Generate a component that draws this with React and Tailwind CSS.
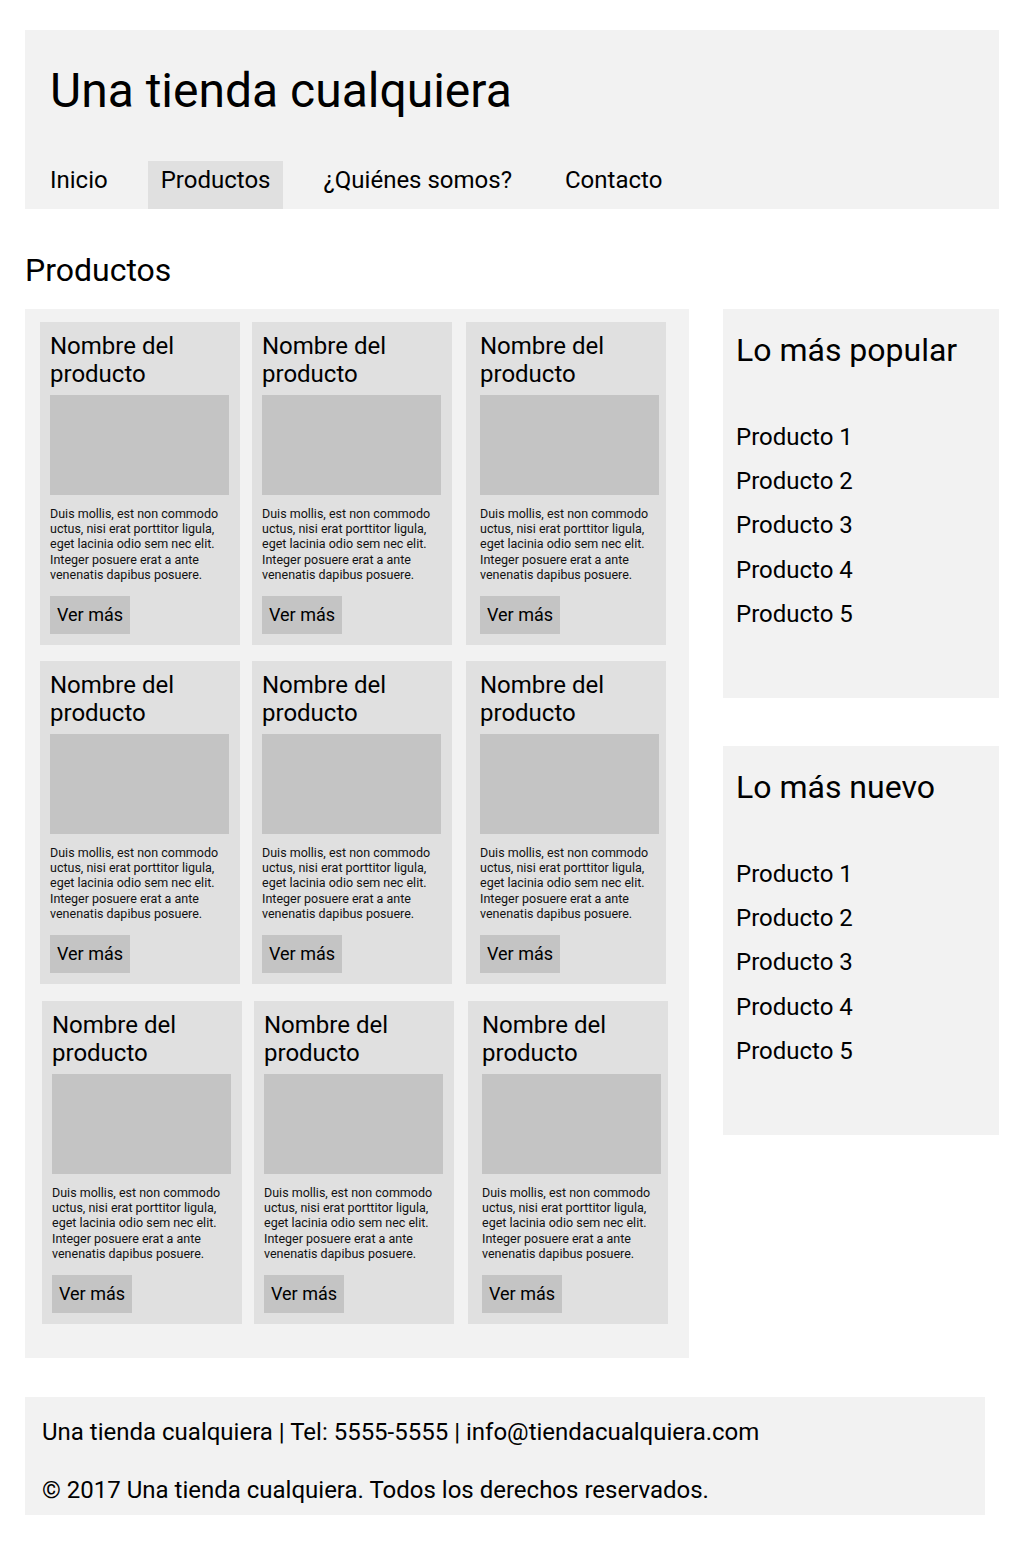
import React from 'react';

const navItems = ['Inicio', 'Productos', '¿Quiénes somos?', 'Contacto'];

const rows = [
  { top: 'mt-[13px]', offsets: ['ml-[15px]', 'ml-[12px]', 'ml-[14px]'] },
  { top: 'mt-[16px]', offsets: ['ml-[15px]', 'ml-[12px]', 'ml-[14px]'] },
  { top: 'mt-[17px]', offsets: ['ml-[17px]', 'ml-[12px]', 'ml-[14px]'] },
];

function ProductCard({ offset, wide }) {
  return (
    <div className={`${offset} w-[200px] bg-[#e0e0e0] pt-[10px] pb-[11px] ${wide ? 'pl-[14px] pr-[7px]' : 'pl-[10px] pr-[11px]'}`}>
      <h3 className="text-[24px] leading-[28px] text-black">Nombre del producto</h3>
      <div className="mt-[7px] h-[100px] w-[179px] bg-[#c4c4c4]" />
      <p className="mt-[11px] text-[12.5px] leading-[15.4px] text-[#111]">
        Duis mollis, est non commodo uctus, nisi erat porttitor ligula, eget lacinia odio sem nec elit.
        Integer posuere erat a ante venenatis dapibus posuere.
      </p>
      <button className="mt-[13px] bg-[#c4c4c4] px-[7px] py-[8px] text-[18px] leading-[22px] text-black">
        Ver más
      </button>
    </div>
  );
}

function SideBox({ title, className = '' }) {
  return (
    <div className={`h-[389px] bg-[#f2f2f2] pl-[13px] pt-[23px] ${className}`}>
      <h2 className="text-[32px] leading-[37px] text-black">{title}</h2>
      <ul className="mt-[46px]">
        {[1, 2, 3, 4, 5].map((n) => (
          <li key={n} className="text-[24px] leading-[44.4px] text-black">
            Producto {n}
          </li>
        ))}
      </ul>
    </div>
  );
}

export default function App() {
  return (
    <div className="min-h-[1545px] bg-white px-[25px] pt-[30px] pb-[30px] font-['Roboto',sans-serif] text-black">
      <header className="w-[974px] bg-[#f2f2f2] pt-[33px]">
        <h1 className="pl-[25px] text-[48px] leading-[56px]">Una tienda cualquiera</h1>
        <nav className="mt-[42px] flex gap-[27px] pl-[12px]">
          {navItems.map((item) => (
            <a
              key={item}
              className={`px-[13px] pt-[5px] pb-[15px] text-[24px] leading-[28px] ${item === 'Productos' ? 'bg-[#e0e0e0]' : ''}`}
            >
              {item}
            </a>
          ))}
        </nav>
      </header>

      <h2 className="mt-[43px] text-[32px] leading-[37.5px]">Productos</h2>

      <div className="mt-[19px] flex items-start">
        <section className="w-[664px] bg-[#f2f2f2] pb-[34px]">
          {rows.map((row, i) => (
            <div key={i} className={`${row.top} flex`}>
              {row.offsets.map((off, j) => (
                <ProductCard key={j} offset={off} wide={j === 2} />
              ))}
            </div>
          ))}
        </section>

        <aside className="ml-[34px] w-[276px]">
          <SideBox title="Lo más popular" />
          <SideBox title="Lo más nuevo" className="mt-[48px]" />
        </aside>
      </div>

      <footer className="mt-[39px] w-[960px] bg-[#f2f2f2] pl-[17px] pt-[21px] pb-[11px] text-[24px] leading-[28px]">
        <p>Una tienda cualquiera | Tel: 5555-5555 | info@tiendacualquiera.com</p>
        <p className="mt-[30px]">© 2017 Una tienda cualquiera. Todos los derechos reservados.</p>
      </footer>
    </div>
  );
}
